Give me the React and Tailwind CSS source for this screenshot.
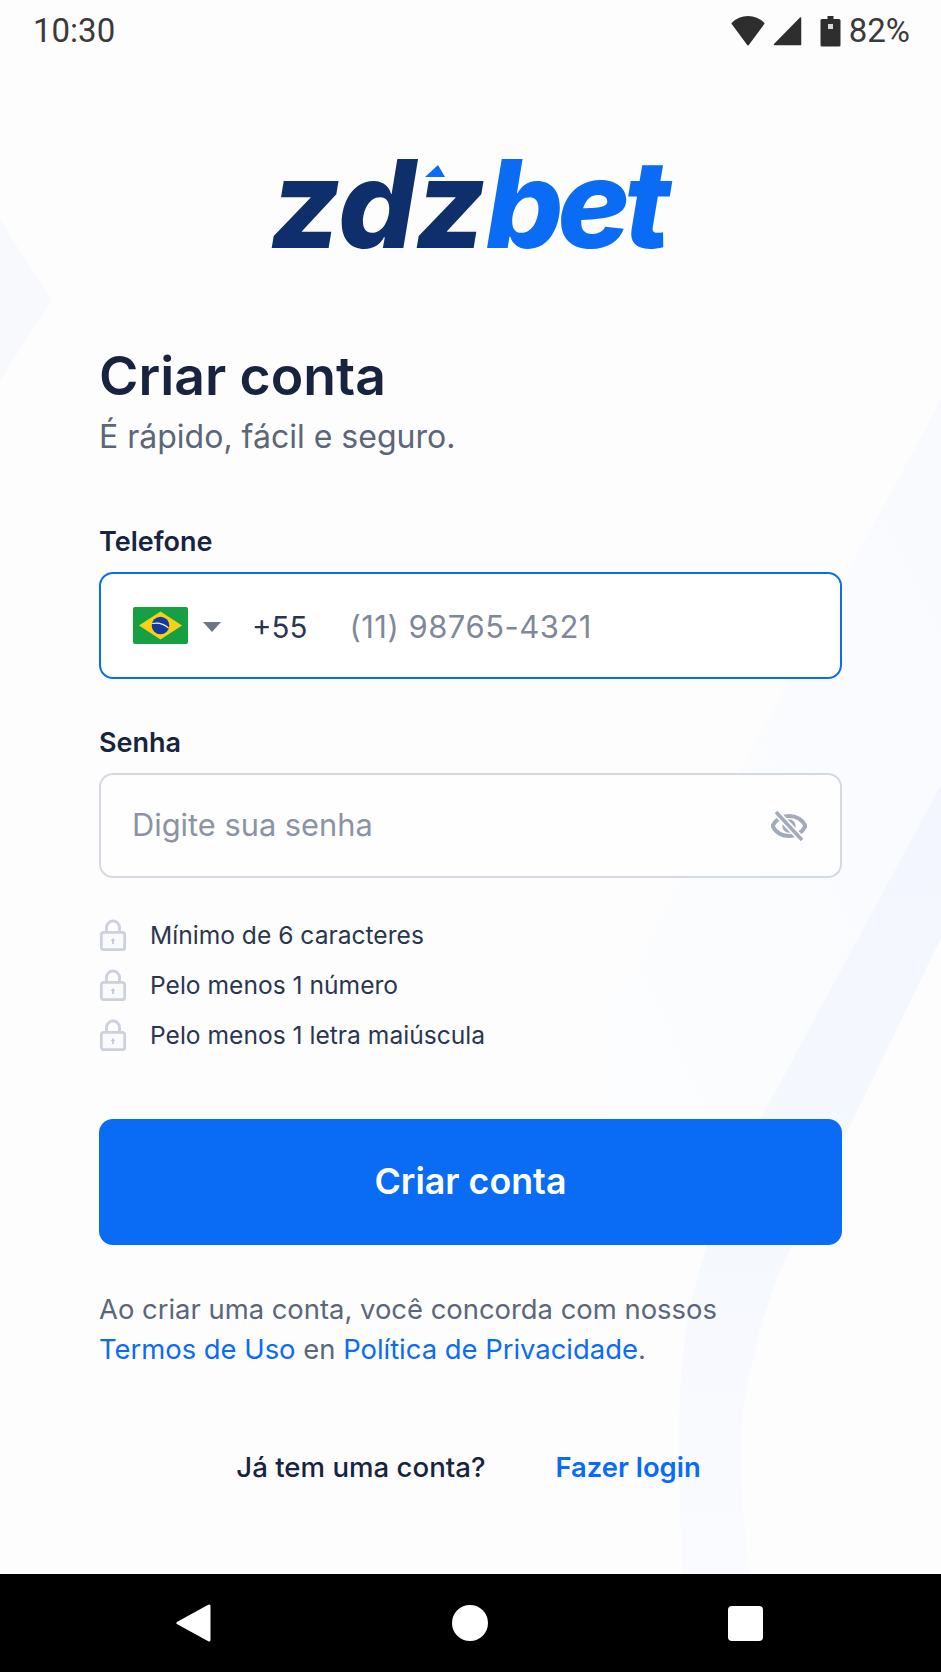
import React from "react";

function Lock() {
  return (
    <svg width="28" height="32" viewBox="0 0 28 32" fill="none" className="shrink-0">
      <path d="M7.500 14V8.500a6.500 6.500 0 0 1 13 0V14" stroke="#ccd1dc" strokeWidth="2.800" />
      <rect x="2.300" y="13.300" width="23.400" height="17.400" rx="2.500" stroke="#ccd1dc" strokeWidth="2.800" fill="#f9fafc" />
      <path d="M14 19l2.400 3h-1.500v3h-1.800v-3h-1.500z" fill="#c3c9d6" />
    </svg>
  );
}

function Rule({ children }) {
  return (
    <div className="flex items-center h-[50px]">
      <Lock />
      <span className="ml-[23px] text-[24.6px] text-[#2a3650]">{children}</span>
    </div>
  );
}

function Flag() {
  return (
    <svg width="55" height="37" viewBox="0 0 55 37" className="shrink-0">
      <rect width="55" height="37" rx="2" fill="#17a043" />
      <path d="M27.500 4.500L49 18.500L27.500 32.500L6 18.500z" fill="#f8d117" />
      <circle cx="27.500" cy="18.500" r="8.800" fill="#16399c" />
      <path d="M19.200 16.500c6-1 12 .6 16.400 4.600" stroke="#f2f4f8" strokeWidth="1.200" fill="none" />
    </svg>
  );
}

export default function App() {
  return (
    <div className="relative w-[941px] h-[1672px] overflow-hidden flex flex-col bg-[#fdfdfe] font-['Inter','Liberation_Sans',sans-serif]">
      <svg className="absolute left-0 top-0 pointer-events-none" width="941" height="1574" viewBox="0 0 941 1574" fill="none">
        <defs>
          <linearGradient id="band" x1="0" y1="0" x2="0" y2="1">
            <stop offset="0" stopColor="#f3f6fe" />
            <stop offset="0.55" stopColor="#f5f8fe" />
            <stop offset="1" stopColor="#fafbfe" />
          </linearGradient>
          <linearGradient id="wedge" x1="1" y1="0" x2="0" y2="1">
            <stop offset="0" stopColor="#f8fafe" />
            <stop offset="1" stopColor="#fcfdfe" />
          </linearGradient>
        </defs>
        <path d="M0 220L52 300L0 380z" fill="#f8f9fd" />
        <path d="M941 400L610 1010L600 1125L800 1125L941 785z" fill="url(#wedge)" />
        <path d="M941 785L767 1107C720 1190 685 1290 680 1390C678 1460 680 1530 683 1574H750C740 1500 738 1440 745 1400C755 1340 770 1290 790 1250L941 938z" fill="url(#band)" />
      </svg>

      <header className="relative flex items-center justify-between h-[60px] pl-[33px] pr-[31px] pt-[1px] bg-[#fdfdfd] font-['Roboto',sans-serif] text-[33px] text-[#3a3a3a]">
        <span>10:30</span>
        <div className="flex items-center">
          <svg width="34" height="30" viewBox="0 0 34 30" className="mr-[8px]">
            <path d="M1.500 7.500C6 3 11 1 17 1s11 2 15.500 6.500L17 28.500z" fill="#2e2e2e" stroke="#2e2e2e" strokeWidth="2" strokeLinejoin="round" />
          </svg>
          <svg width="29" height="30" viewBox="0 0 29 30" className="mr-[18px]">
            <path d="M27.500 2V28.500H1.500z" fill="#2e2e2e" stroke="#2e2e2e" strokeWidth="1.500" strokeLinejoin="round" />
          </svg>
          <svg width="21" height="32" viewBox="0 0 21 32" className="mr-[8px]">
            <path d="M7.500 1h6v3h5.500a1.500 1.500 0 0 1 1.500 1.500v24.500a1.500 1.500 0 0 1-1.500 1.500H2a1.500 1.500 0 0 1-1.500-1.500V5.500A1.500 1.500 0 0 1 2 4h5.500z" fill="#2e2e2e" />
            <rect x="8" y="9" width="5" height="5" fill="#d8d8d8" />
          </svg>
          <span>82%</span>
        </div>
      </header>

      <main className="relative flex-1 flex flex-col pl-[99px] pr-[99px]">
        <div className="relative flex justify-center mt-[79px] h-[130px]">
          <div className="relative italic font-extrabold text-[122px] leading-[130px] ml-[-6px]">
            <span className="text-[#0f2f6c] tracking-[-0.5px]">zdz</span>
            <span className="text-[#0a6cf5] tracking-[-6px]">bet</span>
            <svg className="absolute left-[155px] top-[26px]" width="21" height="12" viewBox="0 0 21 12">
              <path d="M13 0L20 12H0z" fill="#0a6cf5" />
            </svg>
          </div>
        </div>

        <h1 className="mt-[75px] text-[53.5px] leading-[64px] font-semibold text-[#18243f]">Criar conta</h1>
        <p className="mt-[7px] text-[32px] leading-[44px] text-[#5c6679]">É rápido, fácil e seguro.</p>

        <label className="mt-[65px] text-[27px] leading-[36px] font-semibold text-[#18243f]">Telefone</label>
        <div className="mt-[12px] h-[107px] rounded-[14px] border-2 border-[#0a6cf5] bg-white flex items-center pl-[32px]">
          <Flag />
          <svg width="20" height="12" viewBox="0 0 20 12" className="ml-[14px] mt-[2px]">
            <path d="M1 1h18l-9 10z" fill="#6c7687" />
          </svg>
          <span className="ml-[30px] mt-[3px] text-[29.5px] text-[#2a3650]">+55</span>
          <span className="ml-[42px] mt-[3px] text-[31px] text-[#7f8899] tracking-[0.5px]">(11) 98765-4321</span>
        </div>

        <label className="mt-[46px] text-[27px] leading-[36px] font-semibold text-[#18243f]">Senha</label>
        <div className="mt-[12px] h-[105px] rounded-[14px] border-2 border-[#d5d9e2] bg-[#fefefe] flex items-center justify-between pl-[31px] pr-[33px]">
          <span className="text-[30.8px] text-[#8b93a4]">Digite sua senha</span>
          <svg width="36" height="32" viewBox="0 0 36 32" fill="none">
            <path d="M1.500 16C5 9 11 6 18 6s13 3 16.500 10C31 23 25 26 18 26S5 23 1.500 16z" stroke="#a3abbb" strokeWidth="4" />
            <circle cx="18" cy="16" r="5" stroke="#a3abbb" strokeWidth="3.500" />
            <path d="M5 2l26 28" stroke="#fcfdfe" strokeWidth="7" />
            <path d="M5 2l26 28" stroke="#a3abbb" strokeWidth="3.500" />
          </svg>
        </div>

        <div className="mt-[32px] flex flex-col">
          <Rule>Mínimo de 6 caracteres</Rule>
          <Rule>Pelo menos 1 número</Rule>
          <Rule>Pelo menos 1 letra maiúscula</Rule>
        </div>

        <button className="mt-[59px] h-[126px] rounded-[14px] bg-[#0a6cf5] text-white text-[35.8px] font-semibold flex items-center justify-center">
          Criar conta
        </button>

        <p className="mt-[44px] text-[27.4px] leading-[40px] text-[#5c6679]">
          Ao criar uma conta, você concorda com nossos
          <br />
          <span className="text-[#0a6cf5]">Termos de Uso</span> en{" "}
          <span className="text-[#0a6cf5]">Política de Privacidade</span>.
        </p>

        <div className="mt-[78px] pr-[4px] flex justify-center items-center text-[27.6px] font-medium">
          <span className="text-[#18243f]">Já tem uma conta?</span>
          <span className="ml-[70px] text-[#0a6cf5] font-semibold text-[27.4px]">Fazer login</span>
        </div>
      </main>

      <nav className="relative h-[98px] bg-black flex items-center">
        <svg className="absolute left-[176px] top-[30px]" width="36" height="38" viewBox="0 0 36 38">
          <path d="M33 2v34L2 19z" fill="#fff" stroke="#fff" strokeWidth="3" strokeLinejoin="round" />
        </svg>
        <div className="absolute left-[452px] top-[31px] w-[36px] h-[36px] rounded-full bg-white" />
        <div className="absolute left-[728px] top-[32px] w-[35px] h-[35px] rounded-[4px] bg-white" />
      </nav>
    </div>
  );
}
